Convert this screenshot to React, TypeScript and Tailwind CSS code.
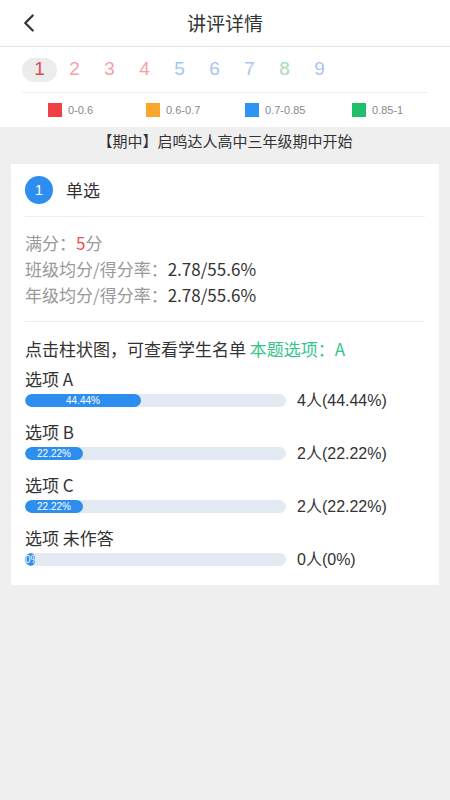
import { ChevronLeft } from "lucide-react";

const tabs = [
  { n: "1", c: "text-[#e5484d]" },
  { n: "2", c: "text-[#f2a3a5]" },
  { n: "3", c: "text-[#f2a3a5]" },
  { n: "4", c: "text-[#f2a3a5]" },
  { n: "5", c: "text-[#a9c6f0]" },
  { n: "6", c: "text-[#a9c6f0]" },
  { n: "7", c: "text-[#a9c6f0]" },
  { n: "8", c: "text-[#a6dcb8]" },
  { n: "9", c: "text-[#a9c6f0]" },
];

const legend = [
  { label: "0-0.6", c: "bg-[#ef4046]", w: "w-[98px]" },
  { label: "0.6-0.7", c: "bg-[#fba52a]", w: "w-[99px]" },
  { label: "0.7-0.85", c: "bg-[#2d93f5]", w: "w-[107px]" },
  { label: "0.85-1", c: "bg-[#1fbe6a]", w: "" },
];

const options = [
  { name: "选项 A", pct: 44.44, text: "44.44%", right: "4人(44.44%)" },
  { name: "选项 B", pct: 22.22, text: "22.22%", right: "2人(22.22%)" },
  { name: "选项 C", pct: 22.22, text: "22.22%", right: "2人(22.22%)" },
  { name: "选项 未作答", pct: 0, text: "0%", right: "0人(0%)" },
];

export default function App() {
  return (
    <div className="w-[450px] h-[800px] bg-[#efefef] flex flex-col font-['Noto_Sans_CJK_SC','Noto_Sans',sans-serif] text-[#333]">
      {/* Header */}
      <div className="h-[47px] bg-white flex items-center relative border-b border-[#e2e2e2]">
        <ChevronLeft className="absolute left-[14px] w-[30px] h-[30px] text-[#333]" strokeWidth={1.8} />
        <span className="w-full text-center text-[19px] text-[#333]">讲评详情</span>
      </div>

      {/* Tabs + legend */}
      <div className="bg-white px-[22px]">
        <div className="flex items-center h-[45px]">
          {tabs.map((t, i) => (
            <div
              key={t.n}
              className={`w-[35px] h-[24px] flex items-center justify-center text-[19px] font-['Liberation_Sans',sans-serif] ${t.c} ${i === 0 ? "bg-[#ececec] rounded-full" : ""}`}
            >
              {t.n}
            </div>
          ))}
        </div>
        <div className="border-t border-[#eeeeee] flex items-center h-[35px] pl-[26px]">
          {legend.map((l) => (
            <div key={l.label} className={`flex items-center gap-[6px] shrink-0 ${l.w}`}>
              <span className={`w-[14px] h-[14px] ${l.c}`} />
              <span className="text-[11px] text-[#888] font-['Liberation_Sans',sans-serif]">{l.label}</span>
            </div>
          ))}
        </div>
      </div>

      {/* Exam title */}
      <div className="h-[28px] flex items-center justify-center text-[15px] text-[#333]">
        【期中】启鸣达人高中三年级期中开始
      </div>

      {/* Card */}
      <div className="mx-[11px] mt-[9px] bg-white px-[14px] pb-[19px]">
        <div className="flex items-center h-[53px] gap-[13px] border-b border-[#eeeeee]">
          <span className="w-[28px] h-[28px] rounded-full bg-[#2d8ef0] text-white text-[15px] flex items-center justify-center font-['Liberation_Sans',sans-serif]">
            1
          </span>
          <span className="text-[17px] text-[#333]">单选</span>
        </div>

        <div className="py-[13px] flex flex-col text-[17px] leading-[26px] border-b border-[#eeeeee]">
          <div className="text-[#999]">
            满分：<span className="text-[#ef4a4f]">5</span>分
          </div>
          <div className="text-[#999]">
            班级均分/得分率：<span className="text-[#333]">2.78/55.6%</span>
          </div>
          <div className="text-[#999]">
            年级均分/得分率：<span className="text-[#333]">2.78/55.6%</span>
          </div>
        </div>

        <div className="pt-[14px] text-[17px] leading-[26px]">
          点击柱状图，可查看学生名单 <span className="text-[#35c68c]">本题选项：A</span>
        </div>

        <div className="flex flex-col gap-[15px] mt-[7px]">
          {options.map((o) => (
            <div key={o.name} className="flex flex-col gap-[5px]">
              <div className="text-[17px] leading-[20px]">{o.name}</div>
              <div className="flex items-center gap-[11px] h-[13px]">
                <div className="w-[261px] h-[13px] rounded-full bg-[#e3eaf3] overflow-hidden flex">
                  <div
                    className="h-full rounded-full bg-[#2d8ef0] text-white text-[10px] leading-[13px] text-center overflow-hidden whitespace-nowrap font-['Liberation_Sans',sans-serif]"
                    style={{ width: o.pct > 0 ? `${o.pct}%` : "10px" }}
                  >
                    {o.text}
                  </div>
                </div>
                <span className="text-[16px] leading-[16px] text-[#333] font-['Liberation_Sans','Noto_Sans_CJK_SC',sans-serif]">{o.right}</span>
              </div>
            </div>
          ))}
        </div>
      </div>
    </div>
  );
}
